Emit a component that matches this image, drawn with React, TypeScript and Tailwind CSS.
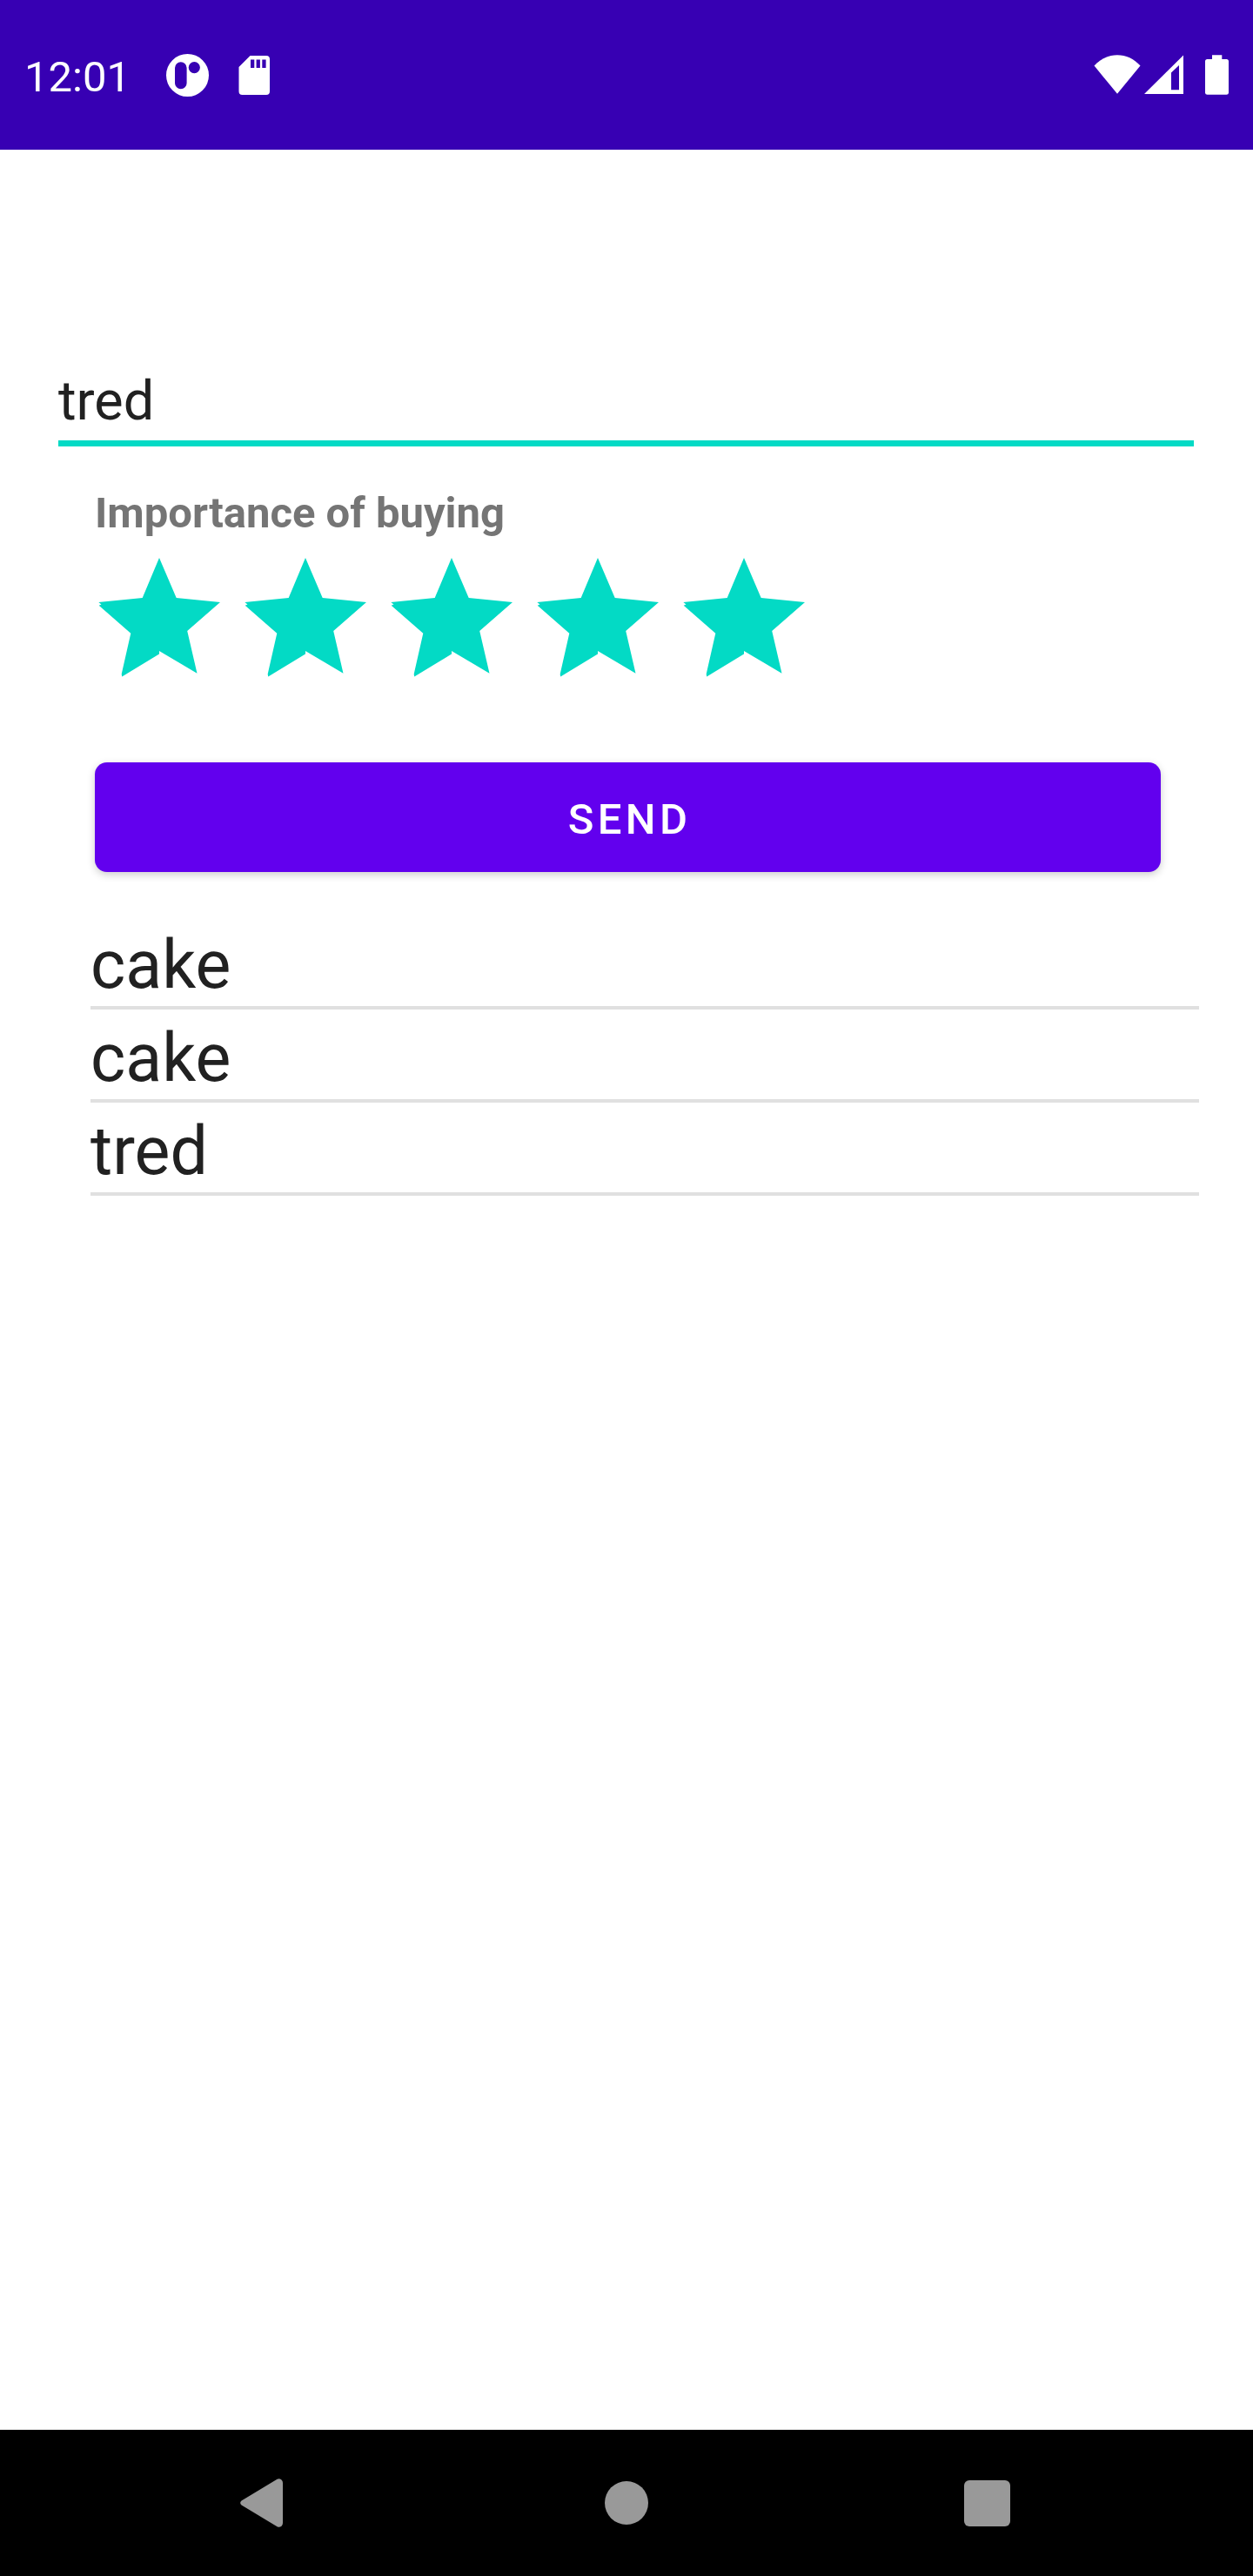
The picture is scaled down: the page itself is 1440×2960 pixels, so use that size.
import { useState } from "react";

const items = ["cake", "cake", "tred"];

function StatusBar() {
  return (
    <header className="flex h-[172px] items-center bg-[#3700B3] text-white">
      <span className="ml-[28px] w-[163px] pt-[4px] text-[49px] leading-[57px]">12:01</span>

      {/* Notification icons */}
      <svg width="49" height="49" viewBox="0 0 49 49" fill="currentColor">
        <path
          fillRule="evenodd"
          d="M24.5 0a24.5 24.5 0 1 1 0 49a24.5 24.5 0 0 1 0-49ZM10 16v17.500a6.800 6.800 0 0 0 13.600 0v-17.500a6.800 6.800 0 0 0-13.600 0ZM32.300 9a6.600 6.600 0 1 0 0 13.200a6.600 6.600 0 0 0 0-13.200Z"
        />
      </svg>
      <svg className="ml-[34px]" width="37" height="45" viewBox="0 0 37 45" fill="currentColor">
        <path
          fillRule="evenodd"
          d="M13.500 0H32a4 4 0 0 1 4 4V41a4 4 0 0 1-4 4H4.500a4 4 0 0 1-4-4V13ZM14 4.500V14h4.300V4.500ZM20.600 4.500V14h4.300V4.500ZM27.300 4.500V14h4.300V4.500Z"
        />
      </svg>

      {/* System icons */}
      <div className="mr-[28px] ml-auto flex items-center">
        <svg width="54" height="46" viewBox="0 0 54 46" fill="currentColor">
          <path d="M0.500 12.500C8 4.500 17 0.300 27 0.300S46 4.500 53.500 12.500L27 44.800Z" />
        </svg>
        <svg className="ml-[4px]" width="45" height="46" viewBox="0 0 45 46" fill="currentColor">
          <path fillRule="evenodd" d="M0 45L45 0.500V45ZM31 20.500V40.300H40V12Z" />
        </svg>
        <svg className="ml-[25px]" width="27" height="46" viewBox="0 0 27 46" fill="currentColor">
          <path d="M8 0.300H19.300V5H24.500A2.500 2.500 0 0 1 27 7.500V43A2.500 2.500 0 0 1 24.500 45.700H2.500A2.500 2.500 0 0 1 0 43V7.500A2.500 2.500 0 0 1 2.500 5H8Z" />
        </svg>
      </div>
    </header>
  );
}

function Star() {
  return (
    <svg width="168" height="137" viewBox="0 0 168 137" fill="currentColor">
      <path d="M74 0L93.700 46L144 51L106.200 84L117.500 132.700L74 107V110.500L31.200 136.500L30.700 133.500L41.300 86.700L4.700 54.700L7.500 53.500L4.300 51L54.700 46Z" />
    </svg>
  );
}

function NavigationBar() {
  return (
    <nav className="flex h-[168px] items-center bg-black text-[#999999]">
      <button className="ml-[276px]" aria-label="Back">
        <svg className="block" width="49" height="56" viewBox="0 0 49 56" fill="currentColor">
          <path d="M1.500 25.500L42.500 0.800Q45 -0.500 47.500 1.500Q49 2.500 49 5V51Q49 53.500 47.500 54.700Q45 56.500 42.500 55.200L1.500 30.500Q-1.200 28 1.500 25.500Z" />
        </svg>
      </button>
      <button className="ml-[370px] size-[50px] rounded-full bg-[#999999]" aria-label="Home" />
      <button className="ml-[363px] size-[53px] rounded-[6px] bg-[#999999]" aria-label="Recent apps" />
    </nav>
  );
}

export default function App() {
  const [name, setName] = useState("tred");

  return (
    <div className="flex h-[2960px] w-[1440px] flex-col bg-white font-['Roboto',sans-serif] text-[#212121]">
      <StatusBar />

      <main className="grow">
        {/* Product name */}
        <input
          className="mt-[251px] ml-[67px] block h-[90px] w-[1305px] border-b-[7px] border-[#03DAC5] pb-[9px] text-[63px] leading-[74px] outline-none"
          aria-label="Product name"
          value={name}
          onChange={(e) => setName(e.target.value)}
        />

        {/* Rating */}
        <section className="mt-[48px] ml-[109px]">
          <h2 className="text-[49px] leading-[57px] font-bold text-[#757575]">
            Importance of buying
          </h2>
          <div className="mt-[23px] flex text-[#03DAC5]">
            {[1, 2, 3, 4, 5].map((value) => (
              <Star key={value} />
            ))}
          </div>
        </section>

        <button className="mt-[98px] ml-[109px] block h-[126px] w-[1225px] rounded-[14px] bg-[#6200EE] pt-[4px] pl-[4px] text-[49px] leading-[57px] font-medium tracking-[4.37px] text-white shadow-[0_3px_10px_rgba(0,0,0,0.2)]">
          SEND
        </button>

        {/* Shopping list */}
        <ul className="mt-[51px] ml-[104px] w-[1274px]">
          {items.map((item, index) => (
            <li
              key={index}
              className="h-[107px] border-b-[4px] border-[#E0E0E0] pt-[11px] text-[77px] leading-[90px]"
            >
              {item}
            </li>
          ))}
        </ul>
      </main>

      <NavigationBar />
    </div>
  );
}
